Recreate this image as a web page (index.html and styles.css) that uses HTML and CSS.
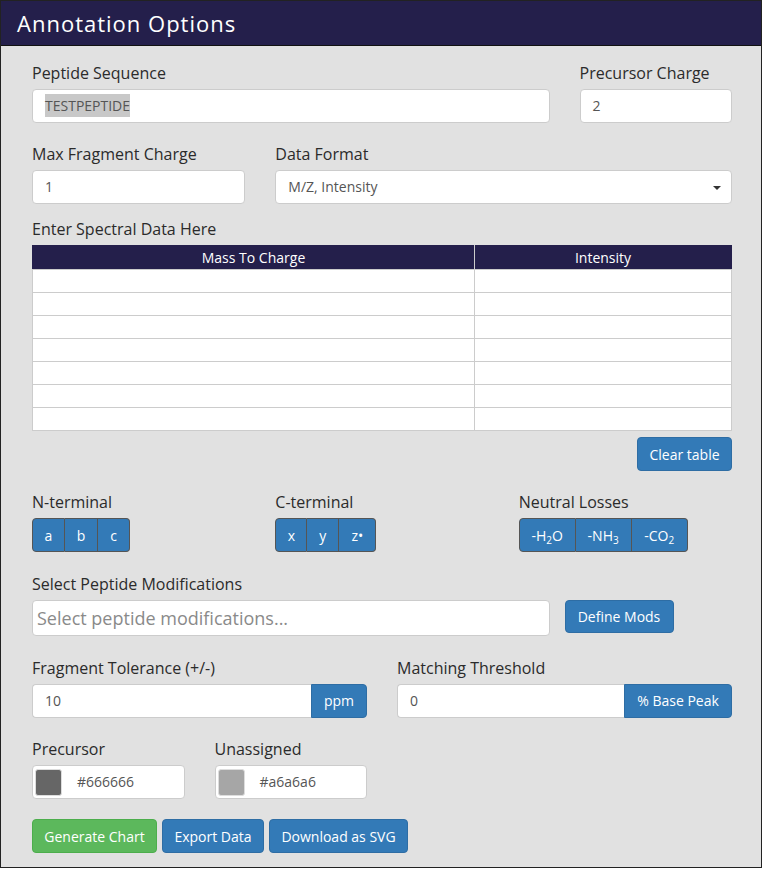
FILE: index.html
```html
<!DOCTYPE html>
<html>
<head>
<meta charset="utf-8">
<link rel="stylesheet" href="styles.css">
</head>
<body>
<div class="panel">
  <div class="panel-heading"><h1 class="title">Annotation Options</h1></div>
  <div class="panel-body">
    <div class="row gap20">
      <div class="col c9">
        <div class="label">Peptide Sequence</div>
        <div class="input"><span class="sel">TESTPEPTIDE</span></div>
      </div>
      <div class="col c3">
        <div class="label">Precursor Charge</div>
        <div class="input">2</div>
      </div>
    </div>
    <div class="row gap14">
      <div class="col c4">
        <div class="label">Max Fragment Charge</div>
        <div class="input">1</div>
      </div>
      <div class="col c8">
        <div class="label">Data Format</div>
        <div class="input select">M/Z, Intensity<span class="caret"></span></div>
      </div>
    </div>
    <div class="group">
      <div class="label">Enter Spectral Data Here</div>
      <table class="data">
        <thead><tr><th>Mass To Charge</th><th>Intensity</th></tr></thead>
        <tbody>
          <tr><td></td><td></td></tr>
          <tr><td></td><td></td></tr>
          <tr><td></td><td></td></tr>
          <tr><td></td><td></td></tr>
          <tr><td></td><td></td></tr>
          <tr><td></td><td></td></tr>
          <tr><td></td><td></td></tr>
        </tbody>
      </table>
      <div class="clear-row"><button class="btn primary clear">Clear table</button></div>
    </div>
    <div class="row gap21">
      <div class="col c4">
        <div class="label">N-terminal</div>
        <div class="btn-group"><button class="gbtn w33">a</button><button class="gbtn w33">b</button><button class="gbtn w32">c</button></div>
      </div>
      <div class="col c4">
        <div class="label">C-terminal</div>
        <div class="btn-group"><button class="gbtn w32">x</button><button class="gbtn w32">y</button><button class="gbtn w37">z•</button></div>
      </div>
      <div class="col c4">
        <div class="label">Neutral Losses</div>
        <div class="btn-group"><button class="gbtn w57">-H<sub>2</sub>O</button><button class="gbtn w56">-NH<sub>3</sub></button><button class="gbtn w56">-CO<sub>2</sub></button></div>
      </div>
    </div>
    <div class="row gap21">
      <div class="col c9">
        <div class="label">Select Peptide Modifications</div>
        <div class="input mods">Select peptide modifications...</div>
      </div>
      <div class="col c3 mods-btn-col">
        <button class="btn primary define">Define Mods</button>
      </div>
    </div>
    <div class="row gap20">
      <div class="col c6">
        <div class="label">Fragment Tolerance (+/-)</div>
        <div class="input-group"><div class="input ig">10</div><div class="addon w56">ppm</div></div>
      </div>
      <div class="col c6">
        <div class="label">Matching Threshold</div>
        <div class="input-group"><div class="input ig">0</div><div class="addon w108">% Base Peak</div></div>
      </div>
    </div>
    <div class="row gap20">
      <div class="col c3">
        <div class="label">Precursor</div>
        <div class="input color"><span class="swatch dark"></span><span class="hex">#666666</span></div>
      </div>
      <div class="col c3">
        <div class="label">Unassigned</div>
        <div class="input color"><span class="swatch light"></span><span class="hex">#a6a6a6</span></div>
      </div>
    </div>
    <div class="actions">
      <button class="btn success gen">Generate Chart</button>
      <button class="btn primary export">Export Data</button>
      <button class="btn primary svg">Download as SVG</button>
    </div>
  </div>
</div>
</body>
</html>
```
FILE: styles.css
```css
* { box-sizing: border-box; }
html, body { margin: 0; padding: 0; background: #ffffff; }
body { font-family: "Open Sans", "Liberation Sans", sans-serif; color: #333; }

.panel {
  width: 762px;
  height: 868px;
  border: 1px solid #222;
  background: #e1e1e1;
}
.panel-heading {
  height: 45px;
  background: #241f4b;
  border-bottom: 1px solid #111;
  padding-left: 16px;
}
.title {
  margin: 0;
  font-weight: 400;
  font-size: 22px;
  letter-spacing: 1px;
  line-height: 44px;
  color: #fff;
}
.panel-body {
  padding: 16px 29px 0 31px;
}

.row {
  display: grid;
  grid-template-columns: repeat(12, 1fr);
  column-gap: 30px;
}
.gap20 { margin-bottom: 20px; }
.gap21 { margin-bottom: 21px; }
.gap14 { margin-bottom: 14px; }
.group { margin-bottom: 20px; }
.c3 { grid-column: span 3; }
.c4 { grid-column: span 4; }
.c6 { grid-column: span 6; }
.c8 { grid-column: span 8; }
.c9 { grid-column: span 9; }

.label {
  font-size: 16px;
  line-height: 22px;
  margin-bottom: 5px;
  color: #2b2b2b;
}

.input {
  height: 34px;
  background: #fff;
  border: 1px solid #ccc;
  border-radius: 4px;
  padding: 0 12px;
  font-size: 14px;
  line-height: 32px;
  color: #555;
}
.sel { background: #c8c8c8; padding: 2px 0; }
.select { position: relative; }
.caret {
  position: absolute;
  right: 10px;
  top: 15px;
  width: 0; height: 0;
  border-left: 4px solid transparent;
  border-right: 4px solid transparent;
  border-top: 4px solid #333;
}

.data {
  width: 100%;
  border-collapse: collapse;
  background: #fff;
  margin-top: 2px;
}
.data th {
  background: #241f4b;
  color: #fff;
  font-weight: 400;
  font-size: 14px;
  height: 24px;
  padding: 0;
  border: 1px solid #ccc;
  border-top: 0;
}
.data th:first-child { width: 442px; border-left: 0; }
.data th:last-child { border-right: 0; }
.data thead tr { border: 1px solid #241f4b; }
.data td {
  height: 23px;
  padding: 0;
  border: 1px solid #ccc;
}
.clear-row { display: flex; justify-content: flex-end; margin-top: 6px; }

.btn {
  height: 34px;
  border-radius: 4px;
  font-family: inherit;
  font-size: 14px;
  padding: 0 12px;
  color: #fff;
  cursor: pointer;
}
.primary { background: #337ab7; border: 1px solid #2e6da4; }
.success { background: #5cb85c; border: 1px solid #4cae4c; }
.clear { width: 95px; padding: 0; }
.gen { width: 125px; padding: 0; }
.export { width: 102px; padding: 0; }
.svg { width: 139px; padding: 0; }

.btn-group { display: flex; }
.gbtn {
  height: 34px;
  background: #337ab7;
  border: 1px solid #555;
  border-left-width: 0;
  color: #fff;
  font-family: inherit;
  font-size: 14px;
  padding: 0;
}
.gbtn:first-child { border-left-width: 1px; border-radius: 4px 0 0 4px; }
.gbtn:last-child { border-radius: 0 4px 4px 0; }
.gbtn sub { font-size: 10px; line-height: 0; vertical-align: -3px; }
.w32 { width: 32px; }
.w33 { width: 33px; }
.w37 { width: 37px; }
.w56 { width: 56px; }
.w57 { width: 57px; }
.w108 { width: 108px; }

.mods {
  height: 36px;
  padding: 0 4px;
  font-size: 18px;
  line-height: 34px;
  color: #8a8a8a;
}
.mods-btn-col { align-self: end; margin-left: -15px; padding-bottom: 3px; }
.define { width: 109px; padding: 0; height: 33px; }

.input-group { display: flex; }
.ig { flex: 1; border-radius: 4px 0 0 4px; border-right: 0; }
.addon {
  height: 34px;
  background: #337ab7;
  border: 1px solid #2e6da4;
  border-radius: 0 4px 4px 0;
  color: #fff;
  font-size: 14px;
  line-height: 32px;
  text-align: center;
  flex: none;
}

.color { display: flex; align-items: center; padding: 0 2px; }
.swatch {
  width: 27px;
  height: 27px;
  border-radius: 3px;
  border: 1px solid #ddd;
}
.swatch.dark { background: #666666; }
.swatch.light { background: #a6a6a6; }
.hex { margin-left: 15px; font-size: 14px; color: #555; }

.actions { display: flex; gap: 5px; }
```
